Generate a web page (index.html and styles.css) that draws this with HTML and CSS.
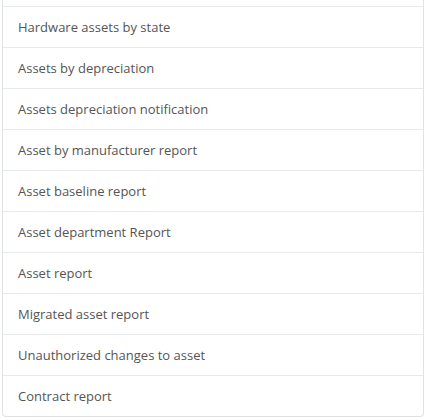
FILE: index.html
```html
<!DOCTYPE html>
<html>
<head>
<meta charset="utf-8">
<link rel="stylesheet" href="styles.css">
</head>
<body>
<ul class="report-list">
  <li class="report-item">Hardware assets by state</li>
  <li class="report-item">Assets by depreciation</li>
  <li class="report-item">Assets depreciation notification</li>
  <li class="report-item">Asset by manufacturer report</li>
  <li class="report-item">Asset baseline report</li>
  <li class="report-item">Asset department Report</li>
  <li class="report-item">Asset report</li>
  <li class="report-item">Migrated asset report</li>
  <li class="report-item">Unauthorized changes to asset</li>
  <li class="report-item">Contract report</li>
</ul>
</body>
</html>
```

FILE: styles.css
```css
html, body {
  margin: 0;
  padding: 0;
  background: #ffffff;
}
.report-list {
  list-style: none;
  margin: 0 0 0 2px;
  padding: 6px 0 0 0;
  width: 420px;
  border: 1px solid #dfe3e6;
  border-top: 0;
  border-radius: 0 0 4px 4px;
  font-family: "Open Sans", "Liberation Sans", sans-serif;
  font-size: 13px;
  color: #555555;
}
.report-item {
  height: 40px;
  line-height: 40px;
  padding: 0 15px;
  border-top: 1px solid #e6eaeb;
}
```
